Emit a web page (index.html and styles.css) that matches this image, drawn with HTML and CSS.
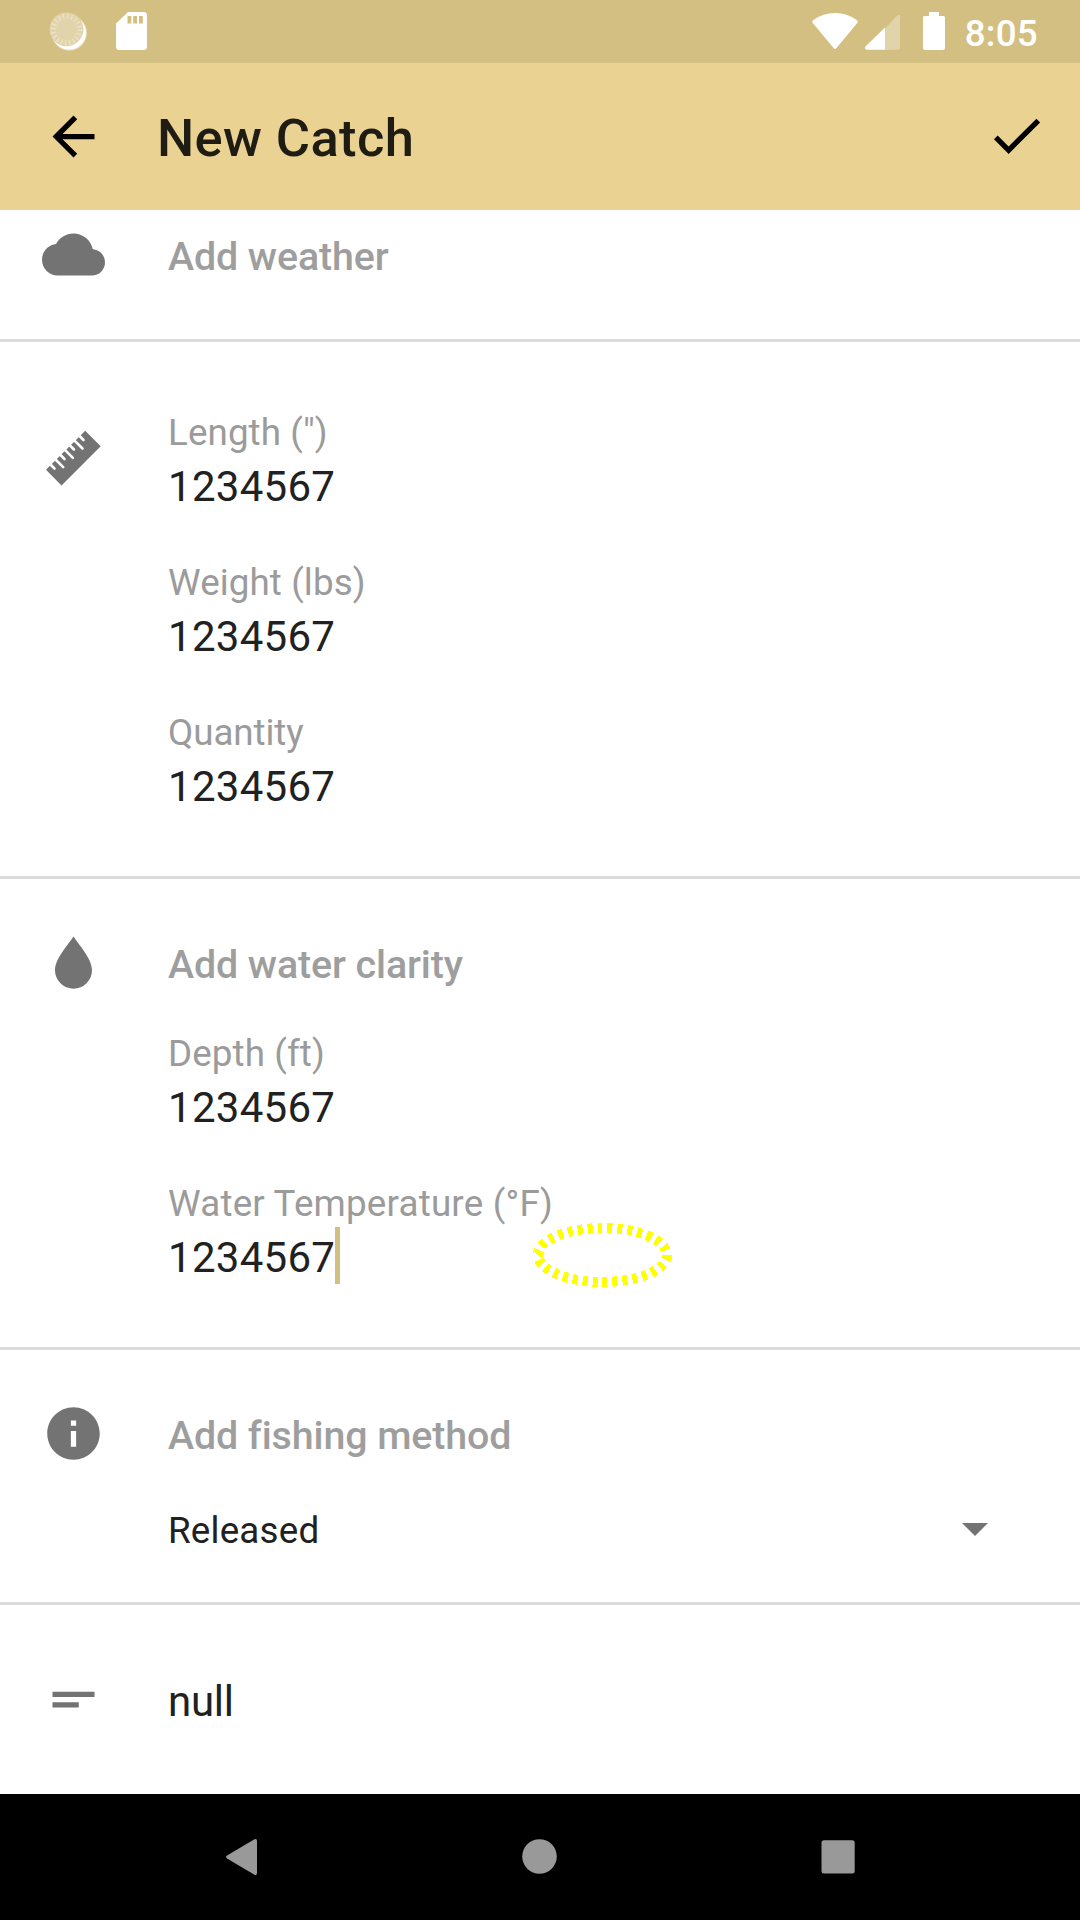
FILE: index.html
```html
<!DOCTYPE html>
<html lang="en">
<head>
<meta charset="utf-8">
<title>New Catch</title>
<link rel="stylesheet" href="styles.css">
</head>
<body>
<div class="screen">
  <div class="status-bar">
    <div class="status-left">
      <svg class="sync" width="40" height="40" viewBox="0 0 40 40">
        <circle cx="21.300" cy="21" r="17.600" fill="#e9dfc2"/>
        <circle cx="21" cy="20.600" r="17" fill="#fff"/>
        <circle cx="18.500" cy="17.300" r="16.900" fill="#e1d3aa"/>
        <circle cx="18.500" cy="17.600" r="13.200" fill="none" stroke="#ebe1c5" stroke-width="5.400" stroke-dasharray="1.500 2.647"/>
      </svg>
      <svg class="sd-card" width="31" height="38" viewBox="0 0 31 38">
        <path fill="#fff" fill-rule="evenodd" d="M12 0H27.500Q31 0 31 3.500V34.500Q31 38 27.500 38H3.500Q0 38 0 34.500V11.500ZM11.500 4V11.500H15.300V4ZM17.200 4V11.500H21V4ZM23 4V11.500H26.800V4Z"/>
      </svg>
    </div>
    <div class="status-right">
      <svg width="46" height="36" viewBox="0 0 46 36"><path fill="#fff" d="M.7 7.500Q10 0 23 0T45.300 7.500Q46.200 8.600 45.200 10L24.500 35Q23 36.800 21.500 35L.8 10Q-.2 8.600 .7 7.500Z"/></svg>
      <svg class="signal" width="35" height="36" viewBox="0 0 35 36"><path fill="#e1d3aa" d="M20 14.500L32.800 1Q35 0 35 2V34Q35 35.700 33 35.700H20Z"/><path fill="#fff" d="M20 13.500V35.700H1.500Q-.8 35 .5 32.500Z"/></svg>
      <svg class="battery" width="22" height="38" viewBox="0 0 22 38"><path fill="#fff" d="M6 0H16V4H20.500Q22 4 22 5.500V36Q22 38 20 38H2Q0 38 0 36V5.500Q0 4 1.500 4H6Z"/></svg>
      <span class="clock">8:05</span>
    </div>
  </div>

  <header class="app-bar">
    <svg class="icon" viewBox="0 0 24 24"><path fill="#000" d="M20 11H7.830l5.590-5.590L12 4l-8 8 8 8 1.410-1.410L7.830 13H20v-2z"/></svg>
    <h1 class="title">New Catch</h1>
    <svg class="icon check" viewBox="0 0 24 24"><path fill="#000" d="M9 16.170L4.830 12l-1.420 1.410L9 19 21 7l-1.410-1.410z"/></svg>
  </header>

  <main class="form">
    <section class="section weather">
      <svg class="icon" viewBox="0 0 24 24"><path d="M19.350 10.040C18.670 6.590 15.640 4 12 4 9.110 4 6.600 5.640 5.350 8.040 2.340 8.360 0 10.910 0 14c0 3.310 2.690 6 6 6h13c2.760 0 5-2.240 5-5 0-2.640-2.050-4.780-4.650-4.960z"/></svg>
      <div class="fields"><div class="add">Add weather</div></div>
    </section>

    <section class="section size">
      <svg class="icon" viewBox="0 0 63 63">
        <path d="M4 42.800L43.200 3.700L58.700 19.200L19.500 58.500Z"/>
        <path class="notches" d="M8 37l4.500 4.500M13 32l8.200 8.200M18 27.500l4.500 4.500M22.700 22.700l8.200 8.200M27.500 18l4.500 4.500M32.300 13.300l8.200 8.200M37 8.500l4.500 4.500"/>
      </svg>
      <div class="fields">
        <div class="field"><div class="label">Length (")</div><div class="value">1234567</div></div>
        <div class="field"><div class="label">Weight (lbs)</div><div class="value">1234567</div></div>
        <div class="field"><div class="label snug">Quantity</div><div class="value">1234567</div></div>
      </div>
    </section>

    <section class="section water">
      <svg class="icon" viewBox="0 0 63 63"><path d="M31.500 4.500C36.500 12.500 50 26.500 50 38.200A18.500 18.500 0 0 1 13 38.200C13 26.500 26.500 12.500 31.500 4.500Z"/></svg>
      <div class="fields">
        <div class="add">Add water clarity</div>
        <div class="field"><div class="label">Depth (ft)</div><div class="value">1234567</div></div>
        <div class="field"><div class="label wide">Water Temperature (°F)</div><div class="value active">1234567<span class="caret"></span></div></div>
      </div>
      <svg class="touch-ring" width="140" height="66" viewBox="0 0 140 66"><ellipse cx="70.500" cy="33" rx="64.500" ry="27" pathLength="300" fill="none" stroke="#ff0" stroke-width="10" stroke-dasharray="5 5" shape-rendering="crispEdges"/></svg>
    </section>

    <section class="section method">
      <svg class="icon" viewBox="0 0 24 24"><path d="M12 2C6.480 2 2 6.480 2 12s4.480 10 10 10 10-4.480 10-10S17.520 2 12 2zm1 15h-2v-6h2v6zm0-8h-2V7h2v2z"/></svg>
      <div class="fields">
        <div class="add">Add fishing method</div>
        <div class="select"><span>Released</span><svg width="26" height="13" viewBox="0 0 26 13"><path d="M0 0H26L13 13Z"/></svg></div>
      </div>
    </section>

    <section class="section notes">
      <svg class="icon" viewBox="0 0 24 24"><path d="M4 9h16v2H4zM4 13h10v2H4z"/></svg>
      <div class="fields"><div class="value note">null</div></div>
    </section>
  </main>

  <nav class="nav-bar">
    <svg width="36" height="36" viewBox="0 0 36 36"><path d="M30.500 .3Q33 -.7 33 2V34Q33 36.700 30.500 35.700L3 19.500Q1 18 3 16.500Z"/></svg>
    <svg width="36" height="36" viewBox="0 0 36 36"><circle cx="17.500" cy="17.500" r="17.300"/></svg>
    <svg width="36" height="36" viewBox="0 0 36 36"><rect x="1.500" y="1.300" width="33.200" height="33.200" rx="2.500"/></svg>
  </nav>
</div>
</body>
</html>
```

FILE: styles.css
```css
* {
  box-sizing: border-box;
}

body {
  margin: 0;
  background: #fff;
  color: #212121;
  font-family: Roboto, sans-serif;
}

svg {
  display: block;
  flex: none;
}

.screen {
  display: flex;
  flex-direction: column;
  width: 1080px;
  height: 1920px;
  overflow: hidden;
}

.status-bar {
  display: flex;
  justify-content: space-between;
  height: 63px;
  padding: 12px 42px 0 48px;
  background: #d4bf83;
}

.status-left,
.status-right {
  display: flex;
  align-items: flex-start;
}

.status-left {
  gap: 28px;
}

.status-right svg:first-child {
  margin-top: 1px;
}

.signal {
  margin: 2px 23px 0 7px;
}

.battery {
  margin-right: 20px;
}

.clock {
  color: #fff;
  font-size: 36.75px;
  font-weight: 500;
  letter-spacing: 0.25px;
  line-height: 43px;
}

.app-bar {
  display: flex;
  align-items: center;
  height: 147px;
  padding: 0 32px 0 42px;
  background: #ead392;
}

.icon {
  width: 63px;
  height: 63px;
  fill: #737373;
}

.check {
  margin-bottom: 2px;
}

.title {
  flex: 1;
  margin: 2px 0 0 52px;
  color: #1f1c14;
  font-size: 52.5px;
  font-weight: 500;
  letter-spacing: 0.36px;
  line-height: 62px;
}

.form {
  flex: 1;
}

.section {
  display: grid;
  grid-template-columns: 63px 1fr;
  column-gap: 63px;
  align-items: start;
  padding-left: 42px;
  border-bottom: 3px solid #dcdcdc;
}

.fields {
  display: flex;
  flex-direction: column;
}

.add {
  color: #9e9e9e;
  font-size: 39.375px;
  font-weight: 500;
  letter-spacing: -0.1px;
  line-height: 48px;
}

.label {
  color: #9b9b9b;
  font-size: 36.75px;
  letter-spacing: 0.1px;
  line-height: 48px;
}

.snug {
  letter-spacing: -0.08px;
}

.wide {
  letter-spacing: 0.2px;
}

.value {
  font-size: 42px;
  letter-spacing: 0.28px;
  line-height: 60px;
}

.note {
  letter-spacing: -0.3px;
}

.weather {
  height: 132px;
  padding-top: 13px;
}

.weather .fields {
  padding-top: 10px;
}

.size {
  height: 537px;
  padding-top: 67px;
}

.size .icon {
  margin-top: 18px;
}

.size .fields {
  gap: 42px;
}

.notches {
  fill: none;
  stroke: #fff;
  stroke-width: 2.6;
  stroke-linecap: round;
}

.water {
  position: relative;
  height: 471px;
  padding-top: 53px;
}

.water .fields {
  gap: 42px;
  padding-top: 9px;
}

.water .add {
  margin-bottom: -1px;
}

.active {
  display: flex;
  align-items: center;
  height: 60px;
}

.caret {
  width: 5px;
  height: 57px;
  margin: 0 0 5px;
  background: #d4bf83;
}

.touch-ring {
  position: absolute;
  left: 532px;
  top: 343px;
}

.method {
  height: 255px;
  padding-top: 52px;
}

.method .fields {
  gap: 47px;
  padding-top: 10px;
}

.select {
  display: flex;
  align-items: center;
  justify-content: space-between;
  padding-right: 92px;
  color: #212121;
  font-size: 36.75px;
  letter-spacing: 0.2px;
  line-height: 48px;
}

.select svg {
  margin-bottom: 4px;
  fill: #737373;
}

.notes {
  padding-top: 63px;
  border-bottom: 0;
}

.notes .fields {
  padding-top: 4px;
}

.nav-bar {
  display: flex;
  justify-content: center;
  gap: 262px;
  height: 126px;
  padding: 45px 0 0;
  background: #000;
  fill: #999;
}
```
